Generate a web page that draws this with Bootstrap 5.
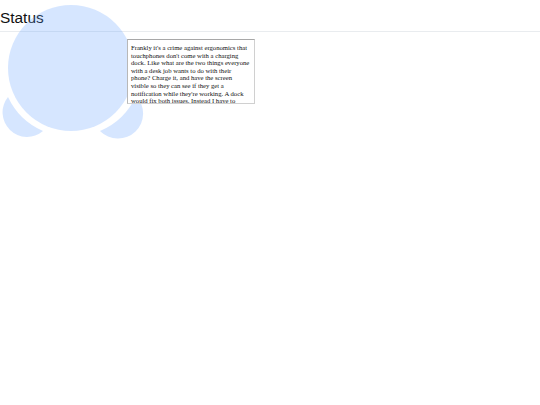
<!DOCTYPE html>
<html lang="en">
<head>
<meta charset="utf-8">
<title>Status</title>
<link href="https://cdn.jsdelivr.net/npm/bootstrap@5.3.0/dist/css/bootstrap.min.css" rel="stylesheet">
<style>
body { background: #fff; color: #000; font-family: "Liberation Sans", Arial, sans-serif; }
.page-head { height: 32px; border-bottom: 1px solid #e9ecef; }
.page-title { font-family: "Liberation Sans", Arial, sans-serif; font-size: 15.4px; line-height: 35px; font-weight: 400; margin: 0; color: #111; }
.stage { position: absolute; left: 0; top: 0; width: 150px; height: 145px; pointer-events: none; }
.tweet-box { position: absolute; left: 127px; top: 39px; width: 128px; height: 65px; overflow: hidden; background: #fff; border: 1px solid #d0d0d0; border-top-color: #a8a8a8; border-left-color: #b8b8b8; padding: 4px 3px 0; font-family: "Liberation Serif", "Times New Roman", serif; font-size: 6.67px; line-height: 7.6px; color: #111; }
</style>
</head>
<body>
<header class="page-head"><h1 class="page-title">Status</h1></header>
<svg class="stage" viewBox="0 0 150 145" aria-hidden="true">
<g fill="#5c9dff" fill-opacity=".25">
<circle cx="71" cy="68" r="63"/>
<path d="M8 97 A24.5 24.5 0 0 0 43 131 A69 69 0 0 1 8 97Z"/>
<path d="M136 96 A24.5 24.5 0 0 1 100 131 A69 69 0 0 0 136 96Z"/>
</g>
</svg>
<div class="tweet-box">Frankly it's a crime against ergonomics that touchphones don't come with a charging dock. Like what are the two things everyone with a desk job wants to do with their phone? Charge it, and have the screen visible so they can see if they get a notification while they're working. A dock would fix both issues. Instead I have to</div>
<script src="https://cdn.jsdelivr.net/npm/bootstrap@5.3.0/dist/js/bootstrap.bundle.min.js"></script>
</body>
</html>
